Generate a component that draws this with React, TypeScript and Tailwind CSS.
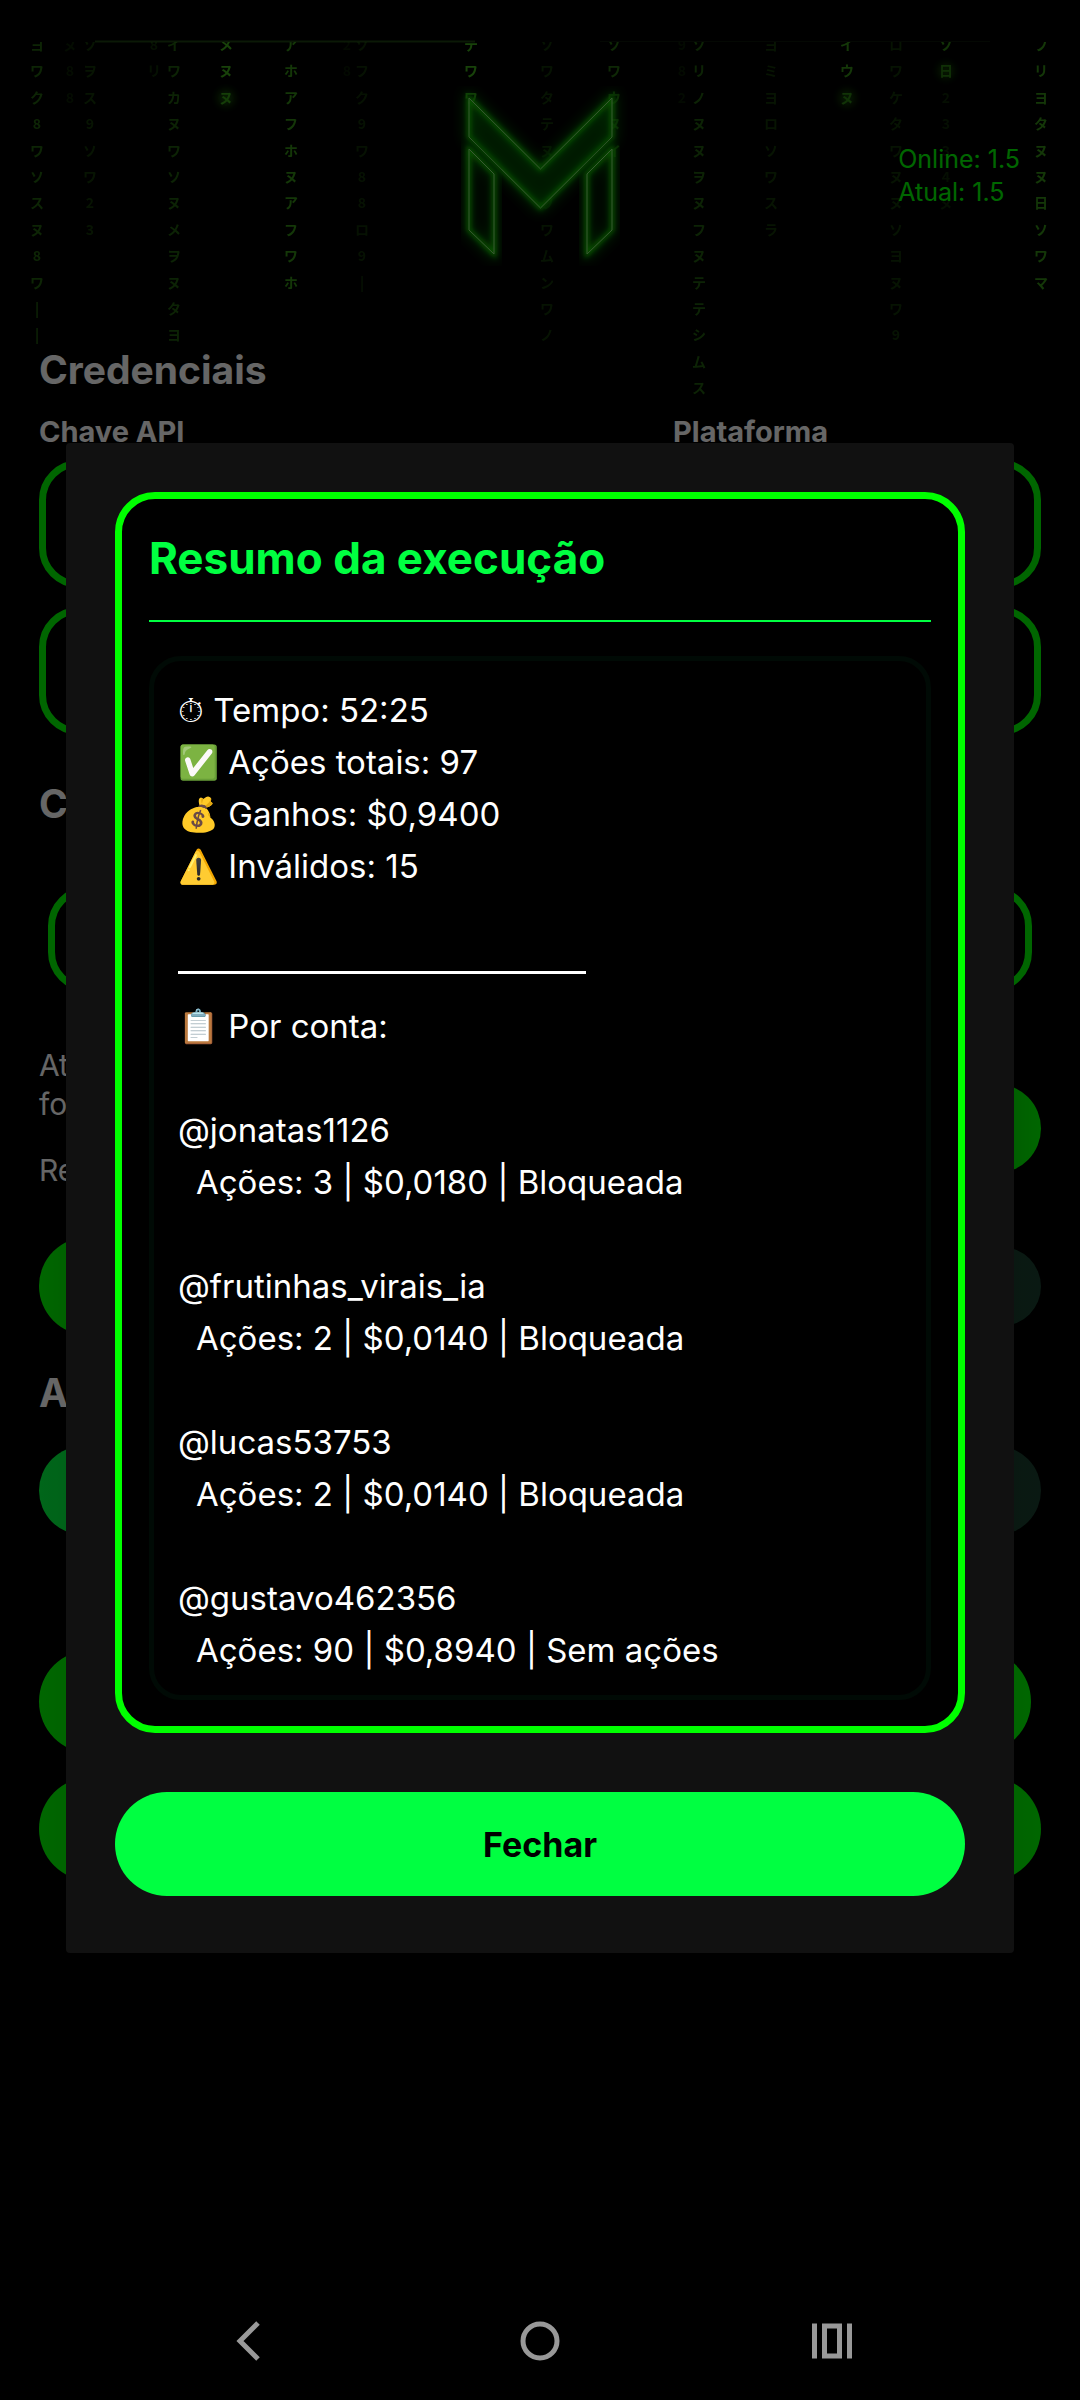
import { useState } from 'react';

const accounts = [
  { user: '@jonatas1126', actions: 3, gain: '$0,0180', status: 'Bloqueada' },
  { user: '@frutinhas_virais_ia', actions: 2, gain: '$0,0140', status: 'Bloqueada' },
  { user: '@lucas53753', actions: 2, gain: '$0,0140', status: 'Bloqueada' },
  { user: '@gustavo462356', actions: 90, gain: '$0,8940', status: 'Sem ações' },
];

// x = column centre, o = opacity of the whole column, head = bright last glyph
const rain = [
  { x: 37, o: 0.5, chars: 'ヨワク8ワソスヌ8ワ||', head: false },
  { x: 70, o: 0.16, chars: 'ヌ88', head: false },
  { x: 90, o: 0.28, chars: 'ソヲス9ソワ23', head: false },
  { x: 154, o: 0.22, chars: '8リ', head: false },
  { x: 174, o: 0.48, chars: 'イワカヌワソヌメヲヌタヨ', head: false },
  { x: 226, o: 0.9, chars: 'メヌヌ', head: true },
  { x: 291, o: 0.75, chars: 'アホアフホヌアフワホ', head: false },
  { x: 347, o: 0.12, chars: '28', head: false },
  { x: 362, o: 0.24, chars: 'ソフク9ワ88ロ9|', head: false },
  { x: 471, o: 0.9, chars: 'テワワ', head: false },
  { x: 547, o: 0.26, chars: 'ソワタテヌスワワムンワノ', head: false },
  { x: 614, o: 0.55, chars: 'ソワウヌイ', head: false },
  { x: 682, o: 0.14, chars: '982', head: false },
  { x: 699, o: 0.48, chars: 'ソリノヌヌヲヌフヌテテシムス', head: false },
  { x: 771, o: 0.28, chars: 'ヨミヨロソワスラ', head: false },
  { x: 847, o: 0.75, chars: 'イウヌ', head: true },
  { x: 896, o: 0.26, chars: 'ロワケタワヌヌソヨヌワ9', head: false },
  { x: 946, o: 0.7, chars: 'ソ日', head: true },
  { x: 946, o: 0.2, chars: '  2334ヌ', head: false },
  { x: 1041, o: 0.75, chars: 'フリヨタヌヌ日ソワマ', head: false },
];

const rowY = (row: number) => Math.round(50 + row * 26.4);

function MatrixRain() {
  return (
    <svg
      className="absolute inset-x-0 top-0 w-full"
      viewBox="0 0 1080 420"
      aria-hidden="true"
      fontFamily="'Noto Sans CJK JP', sans-serif"
      fontSize="14"
      fontWeight="700"
      textAnchor="middle"
    >
      <defs>
        <clipPath id="rain-clip">
          <rect x="0" y="42" width="1080" height="378" />
        </clipPath>
        <filter id="rain-glow" x="-50%" y="-50%" width="200%" height="200%">
          <feGaussianBlur stdDeviation="4" />
        </filter>
      </defs>
      <path d="M95 41.5H475" stroke="#1d3f10" strokeWidth="2" />
      <path d="M600 41.5H990" stroke="#0b1408" strokeWidth="1" />
      <g clipPath="url(#rain-clip)" fill="#43b81c">
        {rain.map((col, c) => (
          <g key={c} opacity={col.o}>
            {[...col.chars].map((ch, i) => (
              <text key={i} x={col.x} y={rowY(i)}>
                {ch}
              </text>
            ))}
            {col.head && (
              <circle
                cx={col.x}
                cy={rowY(col.chars.length - 1) - 5}
                r="8"
                fill="#2f9a0c"
                opacity="0.6"
                filter="url(#rain-glow)"
              />
            )}
          </g>
        ))}
      </g>
    </svg>
  );
}

const logoShapes = [
  'M30 12 101.500 83 173 12V51L101.500 122 30 51Z',
  'M30 63 55 88V168L30 144Z',
  'M173 63 148 88V168L173 144Z',
];

function Logo() {
  return (
    <svg viewBox="0 0 203 180" className="h-[180px] w-[203px]" role="img" aria-label="M">
      <defs>
        <filter id="soft" x="-30%" y="-30%" width="160%" height="160%">
          <feGaussianBlur stdDeviation="2.500" />
        </filter>
        <filter id="wide" x="-30%" y="-30%" width="160%" height="160%">
          <feGaussianBlur stdDeviation="7" />
        </filter>
      </defs>
      <path d={logoShapes[0]} fill="#003c00" />
      {logoShapes.map((d) => (
        <g key={d} fill="none">
          <path d={d} stroke="#0a7a00" strokeWidth="7" filter="url(#wide)" />
          <path d={d} stroke="#14d800" strokeWidth="4" filter="url(#soft)" />
          <path d={d} stroke="#8fe07a" strokeWidth="1" />
        </g>
      ))}
    </svg>
  );
}

function Background() {
  const field = 'w-full rounded-[40px] border-[7px] border-[#00ff00] bg-black px-8 text-[30px]';
  const green = 'rounded-full bg-linear-to-r from-[#00ff00] via-[#009900] to-[#00ff00]';
  const dark = 'rounded-full bg-linear-to-r from-[#10261c] to-[#1a4030]';

  return (
    <div className="relative grow">
      <MatrixRain />
      <header className="relative grid grid-cols-3 items-center pt-[86px] pb-[79px]">
        <div className="col-start-2 flex justify-center">
          <Logo />
        </div>
        <div className="mr-[60px] justify-self-end text-[25px] leading-[33px] text-[#00ff00]">
          <p>Online: 1.5</p>
          <p>Atual: 1.5</p>
        </div>
      </header>

      <main className="relative px-[39px] text-white">
        <h1 className="text-[39px] leading-[50px] font-bold">Credenciais</h1>
        <div className="mt-[21px] grid grid-cols-[612fr_368fr] gap-x-[22px]">
          <label htmlFor="api-key" className="text-[29px] leading-8 font-bold">
            Chave API
          </label>
          <label htmlFor="platform" className="text-[29px] leading-8 font-bold">
            Plataforma
          </label>
          <input id="api-key" type="password" className={`mt-3 h-[128px] ${field}`} />
          <select id="platform" className={`mt-3 h-[128px] appearance-none ${field}`} />
        </div>
        <input aria-label="Credencial" className={`mt-[19px] block h-[128px] ${field}`} />

        <h2 className="mt-[44px] text-[39px] leading-[50px] font-bold">Contas</h2>
        <div className="mx-[9px] mt-[57px]">
          <input aria-label="Conta" className={`block h-[106px] ${field}`} />
        </div>

        <div className="mt-[54px] flex items-end justify-between">
          <div className="text-[30px] leading-[39px]">
            <p>Ativas</p>
            <p>fora</p>
            <p className="mt-[27px]">Rede</p>
          </div>
          <button aria-label="Adicionar" className={`mb-[17px] h-[89px] w-[300px] ${green}`} />
        </div>

        <div className="mt-[47px] flex items-center justify-between">
          <button aria-label="Salvar" className={`h-[98px] w-[480px] ${green}`} />
          <button aria-label="Remover" className={`h-[79px] w-[480px] ${dark}`} />
        </div>

        <h2 className="mt-[33px] text-[39px] leading-[50px] font-bold">Ações</h2>
        <div className="mt-[28px] flex justify-between">
          <button
            aria-label="Iniciar"
            className="h-[89px] w-[480px] rounded-full bg-linear-to-r from-[#00ff41] to-[#006622]"
          />
          <button aria-label="Parar" className={`h-[89px] w-[480px] ${dark}`} />
        </div>
        <div className="mt-[115px] mr-[10px]">
          <button aria-label="Relatório" className={`block h-[103px] w-full ${green}`} />
        </div>
        <button aria-label="Sair" className={`mt-6 block h-[104px] w-full ${green}`} />
      </main>
    </div>
  );
}

function SummaryDialog({ onClose }: { onClose: () => void }) {
  return (
    <div className="fixed inset-0 flex items-center bg-black/60 px-[66px] pb-1">
      <div
        role="dialog"
        aria-modal="true"
        aria-labelledby="summary-title"
        className="w-full rounded-[4px] bg-[#111111] px-[49px] pt-[49px] pb-[57px]"
      >
        <section className="rounded-[40px] border-[7px] border-[#00ff00] bg-black px-[27px] pt-[31px] pb-[26px]">
          <h2
            id="summary-title"
            className="text-[44px] leading-[56px] font-bold whitespace-nowrap text-[#00ff41]"
          >
            Resumo da execução
          </h2>
          <hr className="mt-[34px] border-t-2 border-[#00ff41]" />
          <div className="mt-[34px] rounded-[32px] border-[5px] border-[#000a05] px-6 pt-[23px] pb-[19px] text-[33px] leading-[52px] text-white">
            <p className="h-[52px]">⏱ Tempo: 52:25</p>
            <p className="h-[52px]">✅ Ações totais: 97</p>
            <p className="h-[52px]">💰 Ganhos: $0,9400</p>
            <p className="h-[52px]">⚠️ Inválidos: 15</p>
            <div className="mt-[52px] flex h-14 items-center">
              <hr className="w-[408px] border-t-[3px] border-white" />
            </div>
            <p className="h-[52px]">📋 Por conta:</p>
            {accounts.map((a) => (
              <div key={a.user} className="mt-[52px]">
                <p>{a.user}</p>
                <p className="pl-[18px]">
                  Ações: {a.actions} | {a.gain} | {a.status}
                </p>
              </div>
            ))}
          </div>
        </section>
        <button
          onClick={onClose}
          className="mt-[59px] block h-[104px] w-full rounded-full bg-[#00ff41] text-[34px] font-bold text-black"
        >
          Fechar
        </button>
      </div>
    </div>
  );
}

function NavBar() {
  return (
    <nav className="relative z-10 flex h-[118px] items-center justify-around px-[102px] text-[#999999]">
      <button aria-label="Voltar">
        <svg className="size-12" viewBox="0 0 48 48" fill="none" stroke="currentColor" strokeWidth="5">
          <path d="M34 6 16 24 34 42" />
        </svg>
      </button>
      <button aria-label="Início">
        <svg className="size-12" viewBox="0 0 48 48" fill="none" stroke="currentColor" strokeWidth="5">
          <circle cx="24" cy="24" r="17" />
        </svg>
      </button>
      <button aria-label="Recentes">
        <svg className="size-12" viewBox="0 0 48 48" fill="none" stroke="currentColor" strokeWidth="5">
          <path d="M6.500 6.500v35M41.500 6.500v35M16.500 9h15v30h-15z" />
        </svg>
      </button>
    </nav>
  );
}

export default function App() {
  const [open, setOpen] = useState(true);

  return (
    <div className="flex min-h-screen flex-col bg-black font-['Inter','Noto_Sans_CJK_JP',sans-serif]">
      <Background />
      {open && <SummaryDialog onClose={() => setOpen(false)} />}
      <NavBar />
    </div>
  );
}
